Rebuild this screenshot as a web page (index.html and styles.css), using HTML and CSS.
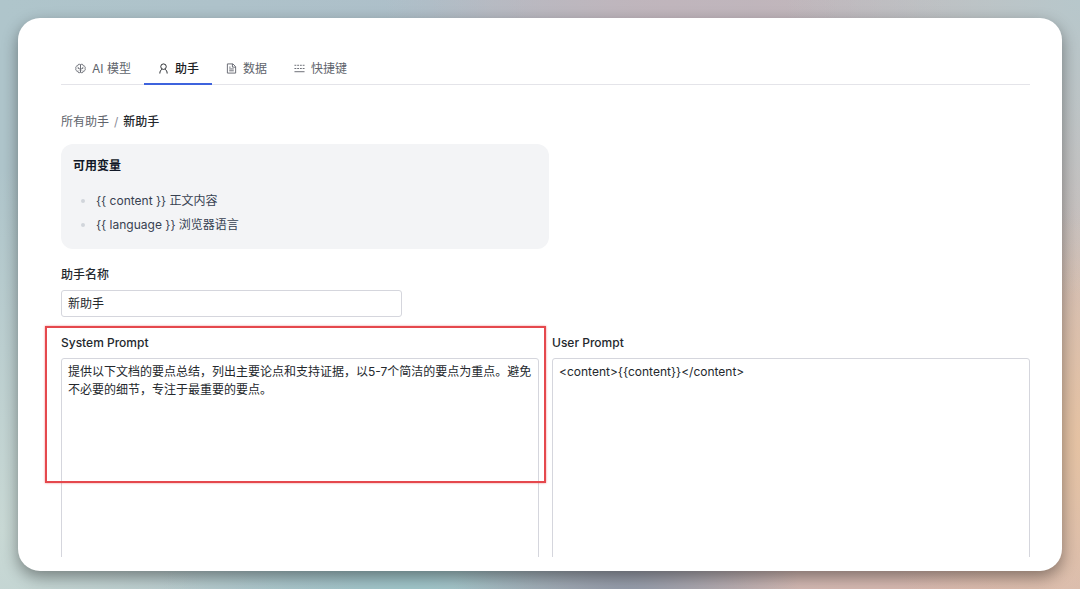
FILE: index.html
```html
<!DOCTYPE html>
<html lang="zh-CN">
<head>
    <meta charset="UTF-8">
    <meta name="viewport" content="width=device-width, initial-scale=1.0">
    <title>助手设置</title>
    <link rel="stylesheet" href="styles.css">
</head>
<body>
    <div class="window">
        <main class="content">
            <nav class="tabs">
                <a class="tab" href="#models">
                    <svg class="icon" viewBox="0 0 24 24">
                        <path d="M12 3v18M12 4.500C10 1.500 6 2.500 6 6 2 6.500 1 9 2 12c-1 3 0 5.500 4 6 0 3.500 4 4.500 6 1.500M12 4.500c2-3 6-2 6 1.500 4 .5 5 3 4 6 1 3 0 5.500-4 6 0 3.500-4 4.500-6 1.500M7 9v3h3M17 9v3h-3M8 17l2-2M16 17l-2-2"/>
                    </svg>
                    AI 模型
                </a>
                <a class="tab active" href="#assistants">
                    <svg class="icon" viewBox="0 0 24 24">
                        <circle cx="12" cy="8" r="6"/>
                        <path d="M9 13.500C6 15 4 18 4 23M15 13.500c3 1.500 5 4.500 5 9.500"/>
                    </svg>
                    助手
                </a>
                <a class="tab" href="#data">
                    <svg class="icon" viewBox="0 0 24 24">
                        <path d="M3 2h12l6 6v14H3zM14 2v7h7M7 9h3M7 13h10M7 17h10"/>
                    </svg>
                    数据
                </a>
                <a class="tab" href="#shortcuts">
                    <svg class="icon" viewBox="0 0 24 24">
                        <path d="M1 5h4M7 5h4M13 5h4M19 5h4M1 12h4M7 12h4M13 12h4M19 12h4M1 19h22"/>
                    </svg>
                    快捷键
                </a>
            </nav>

            <nav class="breadcrumb">
                <a href="#assistants">所有助手</a>
                <span class="slash">/</span>
                <span class="current">新助手</span>
            </nav>

            <section class="variables">
                <h2>可用变量</h2>
                <ul>
                    <li>{{ content }} 正文内容</li>
                    <li>{{ language }} 浏览器语言</li>
                </ul>
            </section>

            <form class="form">
                <div class="field name-field">
                    <label for="name">助手名称</label>
                    <input id="name" type="text" value="新助手">
                </div>
                <div class="prompts">
                    <div class="field highlight">
                        <label for="system">System Prompt</label>
                        <textarea id="system">提供以下文档的要点总结，列出主要论点和支持证据，以5-7个简洁的要点为重点。避免不必要的细节，专注于最重要的要点。</textarea>
                    </div>
                    <div class="field">
                        <label for="user">User Prompt</label>
                        <textarea id="user">&lt;content&gt;{{content}}&lt;/content&gt;</textarea>
                    </div>
                </div>
            </form>
        </main>
    </div>
</body>
</html>
```
FILE: styles.css
```css
* {
    margin: 0;
    padding: 0;
    box-sizing: border-box;
}
body {
    height: 100vh;
    padding: 18px;
    overflow: hidden;
    font-family: Inter, "Noto Sans CJK SC", sans-serif;
    font-size: 12px;
    line-height: 18px;
    color: #24282d;
    background:
        radial-gradient(circle at 58% 104%, #8f98a8, transparent 20%),
        radial-gradient(circle at 38% 100%, #a0c6ca, transparent 28%),
        radial-gradient(circle at 100% 0%, #b7c7cb, transparent 24%),
        radial-gradient(circle at 101% 75%, #e6c3a3, transparent 20%),
        radial-gradient(circle at 88% 108%, #dab9af, transparent 50%),
        radial-gradient(circle at 62% 0%, #c0b5bc, transparent 32%),
        radial-gradient(circle at 0% 90%, #c9d9d5, transparent 30%),
        linear-gradient(to right, #afc5cb 0%, #adbfc9 40%, #c0b6bb 70%, #c8c0be 100%);
}
.window {
    height: 100%;
    padding: 34px 0 14px;
    border-radius: 22px;
    background: #fff;
    box-shadow: 0 6px 16px rgba(0, 0, 0, 0.4);
}
.content {
    height: 100%;
    padding: 0 32px 0 43px;
    overflow: hidden;
}
.tabs {
    display: flex;
    height: 33px;
    border-bottom: 1px solid #e4e4e9;
}
.tab {
    display: flex;
    align-items: center;
    gap: 6px;
    height: 33px;
    padding: 0 13px 0 14px;
    color: #60646c;
    text-decoration: none;
}
.tab.active {
    color: #1c2024;
    font-weight: 500;
    box-shadow: inset 0 -2px #3e63dd;
}
.icon {
    width: 11px;
    height: 11px;
    fill: none;
    stroke: currentColor;
    stroke-width: 2;
}
.breadcrumb {
    display: flex;
    gap: 5px;
    margin-top: 28px;
}
.breadcrumb a {
    color: #60646c;
    text-decoration: none;
}
.slash {
    color: #8b8d98;
}
.current {
    font-weight: 500;
}
.variables {
    width: 488px;
    max-width: 100%;
    margin-top: 13px;
    padding: 12px;
    border-radius: 12px;
    background: #f3f4f6;
    color: #374151;
}
.variables h2 {
    margin-bottom: 13px;
    font-size: 12px;
    line-height: 20px;
    font-weight: 600;
    color: #111827;
}
.variables ul {
    padding-left: 23px;
}
.variables li {
    line-height: 24px;
}
.variables li::marker {
    color: #d1d5db;
}
.form {
    margin-top: 17px;
}
.field {
    display: flex;
    flex-direction: column;
    gap: 6px;
}
label {
    font-weight: 500;
}
input,
textarea {
    width: 100%;
    border: 1px solid #d5d6dd;
    border-radius: 3px;
    background: #fff;
    color: #24282d;
    font: inherit;
}
input {
    height: 27px;
    padding: 0 6px 2px;
}
textarea {
    height: 320px;
    padding: 4px 6px;
    resize: none;
}
.name-field {
    max-width: 341px;
}
.prompts {
    display: grid;
    grid-template-columns: 1fr 1fr;
    gap: 13px;
    margin-top: 17px;
}
/* red frame over the system prompt */
.highlight {
    position: relative;
}
.highlight::after {
    content: "";
    position: absolute;
    box-sizing: border-box;
    top: -8px;
    left: -16px;
    right: -7px;
    height: 157px;
    border: 2px solid #e5484d;
    box-shadow: 0 0 2px rgba(229, 72, 77, 0.6);
    pointer-events: none;
}
```
